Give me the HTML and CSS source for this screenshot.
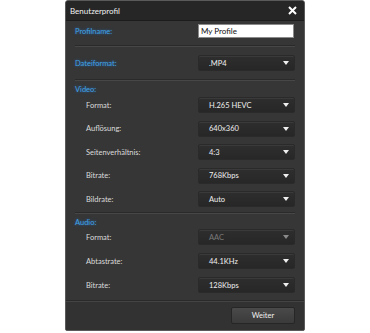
FILE: index.html
```html
<!DOCTYPE html>
<html lang="de">
<head>
<meta charset="utf-8">
<title>Benutzerprofil</title>
<link rel="stylesheet" href="styles.css">
</head>
<body>
<div class="dialog">
  <div class="titlebar">
    <span class="title">Benutzerprofil</span>
    <svg class="close" width="9" height="9" viewBox="0 0 9 9"><path d="M1 1L8 8M8 1L1 8" stroke="#fff" stroke-width="2"/></svg>
  </div>
  <div class="body">
    <div class="row r-profil">
      <span class="lbl blue">Profilname:</span>
      <div class="textbox">My Profile</div>
    </div>
    <div class="sep s1"></div>
    <div class="row r-format">
      <span class="lbl blue">Dateiformat:</span>
      <div class="select"><span>.MP4</span><i class="arrow"></i></div>
    </div>
    <div class="sep s2"></div>
    <div class="section blue">Video:</div>
    <div class="group video">
      <div class="row sub"><span class="lbl">Format:</span><div class="select"><span>H.265 HEVC</span><i class="arrow"></i></div></div>
      <div class="row sub"><span class="lbl">Auflösung:</span><div class="select"><span>640x360</span><i class="arrow"></i></div></div>
      <div class="row sub"><span class="lbl">Seitenverhältnis:</span><div class="select"><span>4:3</span><i class="arrow"></i></div></div>
      <div class="row sub"><span class="lbl">Bitrate:</span><div class="select"><span>768Kbps</span><i class="arrow"></i></div></div>
      <div class="row sub"><span class="lbl">Bildrate:</span><div class="select"><span>Auto</span><i class="arrow"></i></div></div>
    </div>
    <div class="sep s3"></div>
    <div class="section blue">Audio:</div>
    <div class="group audio">
      <div class="row sub"><span class="lbl">Format:</span><div class="select disabled"><span>AAC</span><i class="arrow"></i></div></div>
      <div class="row sub"><span class="lbl">Abtastrate:</span><div class="select"><span>44.1KHz</span><i class="arrow"></i></div></div>
      <div class="row sub"><span class="lbl">Bitrate:</span><div class="select"><span>128Kbps</span><i class="arrow"></i></div></div>
    </div>
  </div>
  <div class="footer">
    <div class="button">Weiter</div>
  </div>
</div>
</body>
</html>
```

FILE: styles.css
```css
html, body {
  margin: 0;
  padding: 0;
  background: #ffffff;
}
body {
  font-family: Lato, "Open Sans", sans-serif;
  font-size: 7.5px;
  color: #e2e2e2;
}
.dialog {
  margin-left: 65px;
  width: 238px;
  height: 329px;
  border: 1px solid #5a5a5a;
  border-radius: 3px 3px 2px 2px;
  background: #363636;
  display: flex;
  flex-direction: column;
  overflow: hidden;
}
.titlebar {
  height: 19px;
  flex: none;
  background: #262626;
  display: flex;
  align-items: center;
  justify-content: space-between;
  padding: 0 7px 0 4px;
  border-bottom: 1px solid #1c1c1c;
}
.title {
  color: #f2f2f2;
  font-size: 8px;
}
.close {
  display: block;
}
.body {
  flex: 1;
  padding: 0 9px 0 9px;
  display: flex;
  flex-direction: column;
}
.row {
  display: flex;
  align-items: center;
  justify-content: space-between;
}
.r-profil {
  height: 20px;
}
.s1 {
  margin-top: 4px;
}
.r-format {
  height: 20px;
  margin-top: 6px;
}
.s2 {
  margin-top: 6px;
}
.s3 {
  margin-top: 5px;
}
.group {
  display: flex;
  flex-direction: column;
  margin-top: 2px;
}
.group.video {
  gap: 7.5px;
}
.group.audio {
  gap: 8px;
  margin-top: 1px;
}
.sub {
  height: 16px;
  padding-left: 11px;
}
.lbl {
  color: #dcdcdc;
}
.blue {
  color: #40a2e6;
  text-shadow: 0 0 3px rgba(40, 130, 220, 0.75);
}
.sep {
  height: 1px;
  flex: none;
  background: #2a2a2a;
  border-bottom: 1px solid #474747;
}
.section {
  height: 10px;
  line-height: 10px;
  margin-top: 4px;
}
.textbox {
  width: 92px;
  height: 12px;
  line-height: 12px;
  background: #ffffff;
  border: 1px solid #8a8a8a;
  color: #111;
  padding: 0 0 0 2px;
  font-size: 8px;
  margin-right: 1px;
}
.select {
  width: 97px;
  height: 16px;
  box-sizing: border-box;
  background: linear-gradient(#2e2e2e, #272727);
  border: 1px solid #2a2a2a;
  border-radius: 2px;
  box-shadow: inset 0 1px 0 #3a3a3a;
  display: flex;
  align-items: center;
  justify-content: space-between;
  padding: 0 5px 0 10px;
  color: #f0f0f0;
}
.select.disabled span {
  color: #7a7a7a;
}
.arrow {
  width: 0;
  height: 0;
  border-left: 3px solid transparent;
  border-right: 3px solid transparent;
  border-top: 4px solid #f0f0f0;
}
.select.disabled .arrow {
  border-top-color: #8a8a8a;
}
.footer {
  height: 29px;
  flex: none;
  border-top: 1px solid #2a2a2a;
  box-shadow: inset 0 1px 0 #444;
  background: #323232;
  display: flex;
  align-items: center;
  justify-content: flex-end;
  padding-right: 9px;
}
.button {
  width: 62px;
  height: 15px;
  line-height: 15px;
  text-align: center;
  background: linear-gradient(#4a4a4a, #3a3a3a);
  border: 1px solid #262626;
  border-radius: 2px;
  color: #f0f0f0;
}
```
